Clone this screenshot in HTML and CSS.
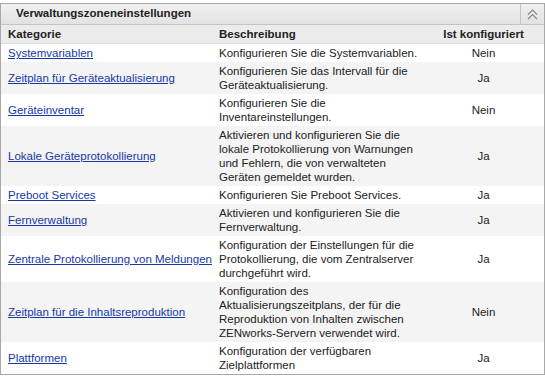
FILE: index.html
```
<!DOCTYPE html>
<html lang="de">
<head>
  <meta charset="UTF-8">
  <title>Verwaltungszoneneinstellungen</title>
  <link rel="stylesheet" href="styles.css">
</head>
<body>
  <div class="panel">
    <div class="panel-title">
      <span class="title-text">Verwaltungszoneneinstellungen</span>
      <span class="collapse">
        <svg width="11" height="11" viewBox="0 0 11 11">
          <polyline points="1,5.5 5.5,1 10,5.5" fill="none" stroke="#8a8a8a" stroke-width="1.2"/>
          <polyline points="1,10 5.5,5.5 10,10" fill="none" stroke="#8a8a8a" stroke-width="1.2"/>
        </svg>
      </span>
    </div>

    <table class="settings">
      <thead>
        <tr>
          <th class="col-cat">Kategorie</th>
          <th class="col-desc">Beschreibung</th>
          <th class="col-conf">Ist konfiguriert</th>
        </tr>
      </thead>
      <tbody>
        <tr>
          <td class="cat"><a href="#">Systemvariablen</a></td>
          <td class="desc">Konfigurieren Sie die Systemvariablen.</td>
          <td class="conf">Nein</td>
        </tr>
        <tr class="alt">
          <td class="cat"><a href="#">Zeitplan für Geräteaktualisierung</a></td>
          <td class="desc">Konfigurieren Sie das Intervall für die Geräteaktualisierung.</td>
          <td class="conf">Ja</td>
        </tr>
        <tr>
          <td class="cat"><a href="#">Geräteinventar</a></td>
          <td class="desc">Konfigurieren Sie die Inventareinstellungen.</td>
          <td class="conf">Nein</td>
        </tr>
        <tr class="alt">
          <td class="cat"><a href="#">Lokale Geräteprotokollierung</a></td>
          <td class="desc">Aktivieren und konfigurieren Sie die lokale Protokollierung von Warnungen und Fehlern, die von verwalteten Geräten gemeldet wurden.</td>
          <td class="conf">Ja</td>
        </tr>
        <tr>
          <td class="cat"><a href="#">Preboot Services</a></td>
          <td class="desc">Konfigurieren Sie Preboot Services.</td>
          <td class="conf">Ja</td>
        </tr>
        <tr class="alt">
          <td class="cat"><a href="#">Fernverwaltung</a></td>
          <td class="desc">Aktivieren und konfigurieren Sie die Fernverwaltung.</td>
          <td class="conf">Ja</td>
        </tr>
        <tr>
          <td class="cat"><a href="#">Zentrale Protokollierung von Meldungen</a></td>
          <td class="desc">Konfiguration der Einstellungen für die Protokollierung, die vom Zentralserver durchgeführt wird.</td>
          <td class="conf">Ja</td>
        </tr>
        <tr class="alt">
          <td class="cat"><a href="#">Zeitplan für die Inhaltsreproduktion</a></td>
          <td class="desc">Konfiguration des Aktualisierungszeitplans, der für die Reproduktion von Inhalten zwischen ZENworks-Servern verwendet wird.</td>
          <td class="conf">Nein</td>
        </tr>
        <tr>
          <td class="cat"><a href="#">Plattformen</a></td>
          <td class="desc">Konfiguration der verfügbaren Zielplattformen</td>
          <td class="conf">Ja</td>
        </tr>
      </tbody>
    </table>
  </div>
</body>
</html>
```

FILE: styles.css
```
body {
  margin: 0;
  padding: 3px 0 0 0;
  background-color: #fff;
  font-family: "Liberation Sans", Arial, sans-serif;
  font-size: 11.5px;
  color: #222;
}

.panel {
  width: 543px;
  border: 1px solid #a8a8a8;
  background-color: #fff;
}

.panel-title {
  display: flex;
  align-items: stretch;
  height: 20px;
  background: linear-gradient(#f0f0f0, #e2e2e2);
  border-bottom: 1px solid #c4c4c4;
}

.title-text {
  flex: 1;
  padding-left: 15px;
  line-height: 19px;
  font-weight: bold;
  color: #222;
}

.collapse {
  width: 23px;
  display: flex;
  align-items: center;
  justify-content: center;
  border-left: 1px solid #c4c4c4;
}

.settings {
  width: 100%;
  border-collapse: collapse;
  table-layout: fixed;
  line-height: 14px;
}

.settings th {
  background-color: #ececec;
  font-weight: bold;
  text-align: left;
  border-bottom: 1px solid #dcdcdc;
}

.settings th.col-cat,
.settings td.cat {
  padding: 2px 1px 2px 7px;
}

.settings th.col-cat {
  width: 204px;
}

.settings th.col-desc,
.settings td.desc {
  padding: 2px 4px 2px 6px;
}

.settings th.col-desc {
  width: 200px;
}

.settings th.col-conf,
.settings td.conf {
  text-align: center;
  padding: 2px 4px;
}

.settings td {
  vertical-align: middle;
}

.settings tr.alt td {
  background-color: #f4f4f4;
}

.settings a {
  color: #1638a8;
  text-decoration: underline;
}
```
